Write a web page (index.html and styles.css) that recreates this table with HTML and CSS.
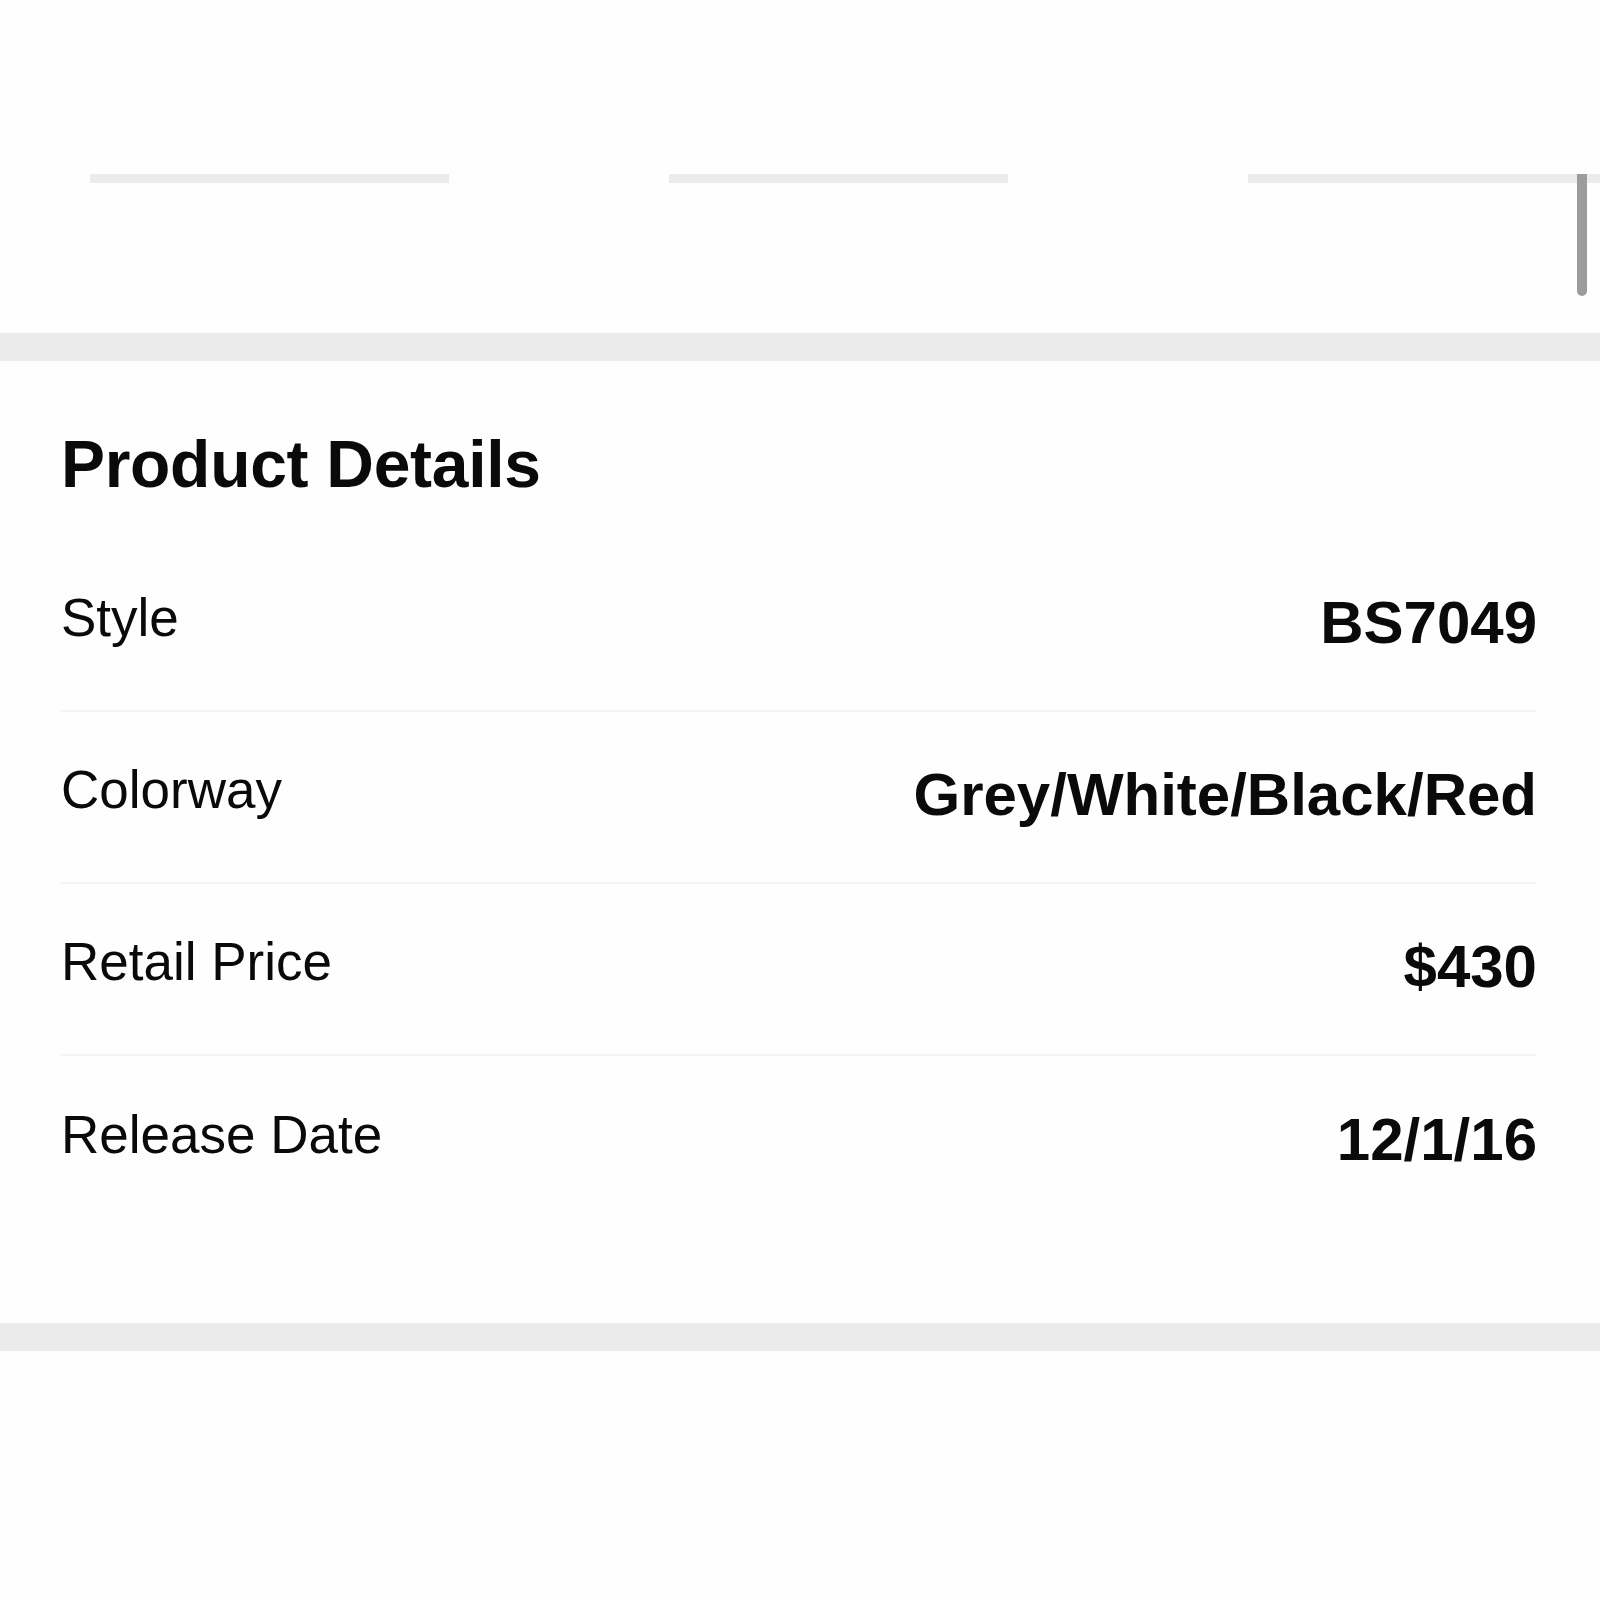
FILE: index.html
```html
<!DOCTYPE html>
<html lang="en">
<head>
    <meta charset="UTF-8">
    <meta name="viewport" content="width=device-width, initial-scale=1.0">
    <title>Product Details</title>
    <link rel="stylesheet" href="styles.css">
</head>

<body>
    <div class="gallery">
        <div class="tabs">
            <div class="tab tab-one"></div>
            <div class="tab tab-two"></div>
            <div class="tab tab-three"></div>
        </div>
        <div class="scroll-thumb"></div>
    </div>

    <div class="divider"></div>

    <div class="details">
        <p class="details-title">Product Details</p>
        <div class="detail-row">
            <span class="label">Style</span>
            <span class="value">BS7049</span>
        </div>
        <div class="detail-row">
            <span class="label">Colorway</span>
            <span class="value">Grey/White/Black/Red</span>
        </div>
        <div class="detail-row">
            <span class="label">Retail Price</span>
            <span class="value">$430</span>
        </div>
        <div class="detail-row last">
            <span class="label">Release Date</span>
            <span class="value">12/1/16</span>
        </div>
    </div>

    <div class="divider"></div>
</body>
</html>
```

FILE: styles.css
```css
*{
    font-family: "Liberation Sans", Arial, sans-serif;
    box-sizing: border-box;
}
body{
    margin: 0;
    background-color: #fefefe;
    color: #0a0a0a;
}
p{
    margin: 0;
}

.gallery{
    position: relative;
    height: 333px;
    padding-top: 174px;
}
.tabs{
    display: flex;
}
.tab{
    height: 9px;
    background-color: #ebebeb;
}
.tab-one{
    margin-left: 90px;
    width: 359px;
}
.tab-two{
    margin-left: 220px;
    width: 339px;
}
.tab-three{
    margin-left: 240px;
    flex: 1;
}
.scroll-thumb{
    position: absolute;
    top: 174px;
    left: 1577px;
    width: 10px;
    height: 122px;
    background-color: #9c9c9c;
    border-radius: 0 0 5px 5px;
}

.divider{
    height: 28px;
    background-color: #ebebeb;
}

.details{
    padding: 70px 63px 95px 61px;
}
.details-title{
    font-size: 66px;
    font-weight: bold;
    line-height: 1;
    letter-spacing: -0.3px;
    margin-bottom: 43px;
}
.detail-row{
    display: flex;
    justify-content: space-between;
    align-items: center;
    height: 172px;
    padding-bottom: 4px;
    border-bottom: 2px solid #f5f5f5;
}
.detail-row.last{
    border-bottom: none;
}
.label{
    font-size: 53px;
    line-height: 1;
    margin-bottom: 11px;
}
.value{
    font-size: 60px;
    font-weight: bold;
    line-height: 1;
}
```
